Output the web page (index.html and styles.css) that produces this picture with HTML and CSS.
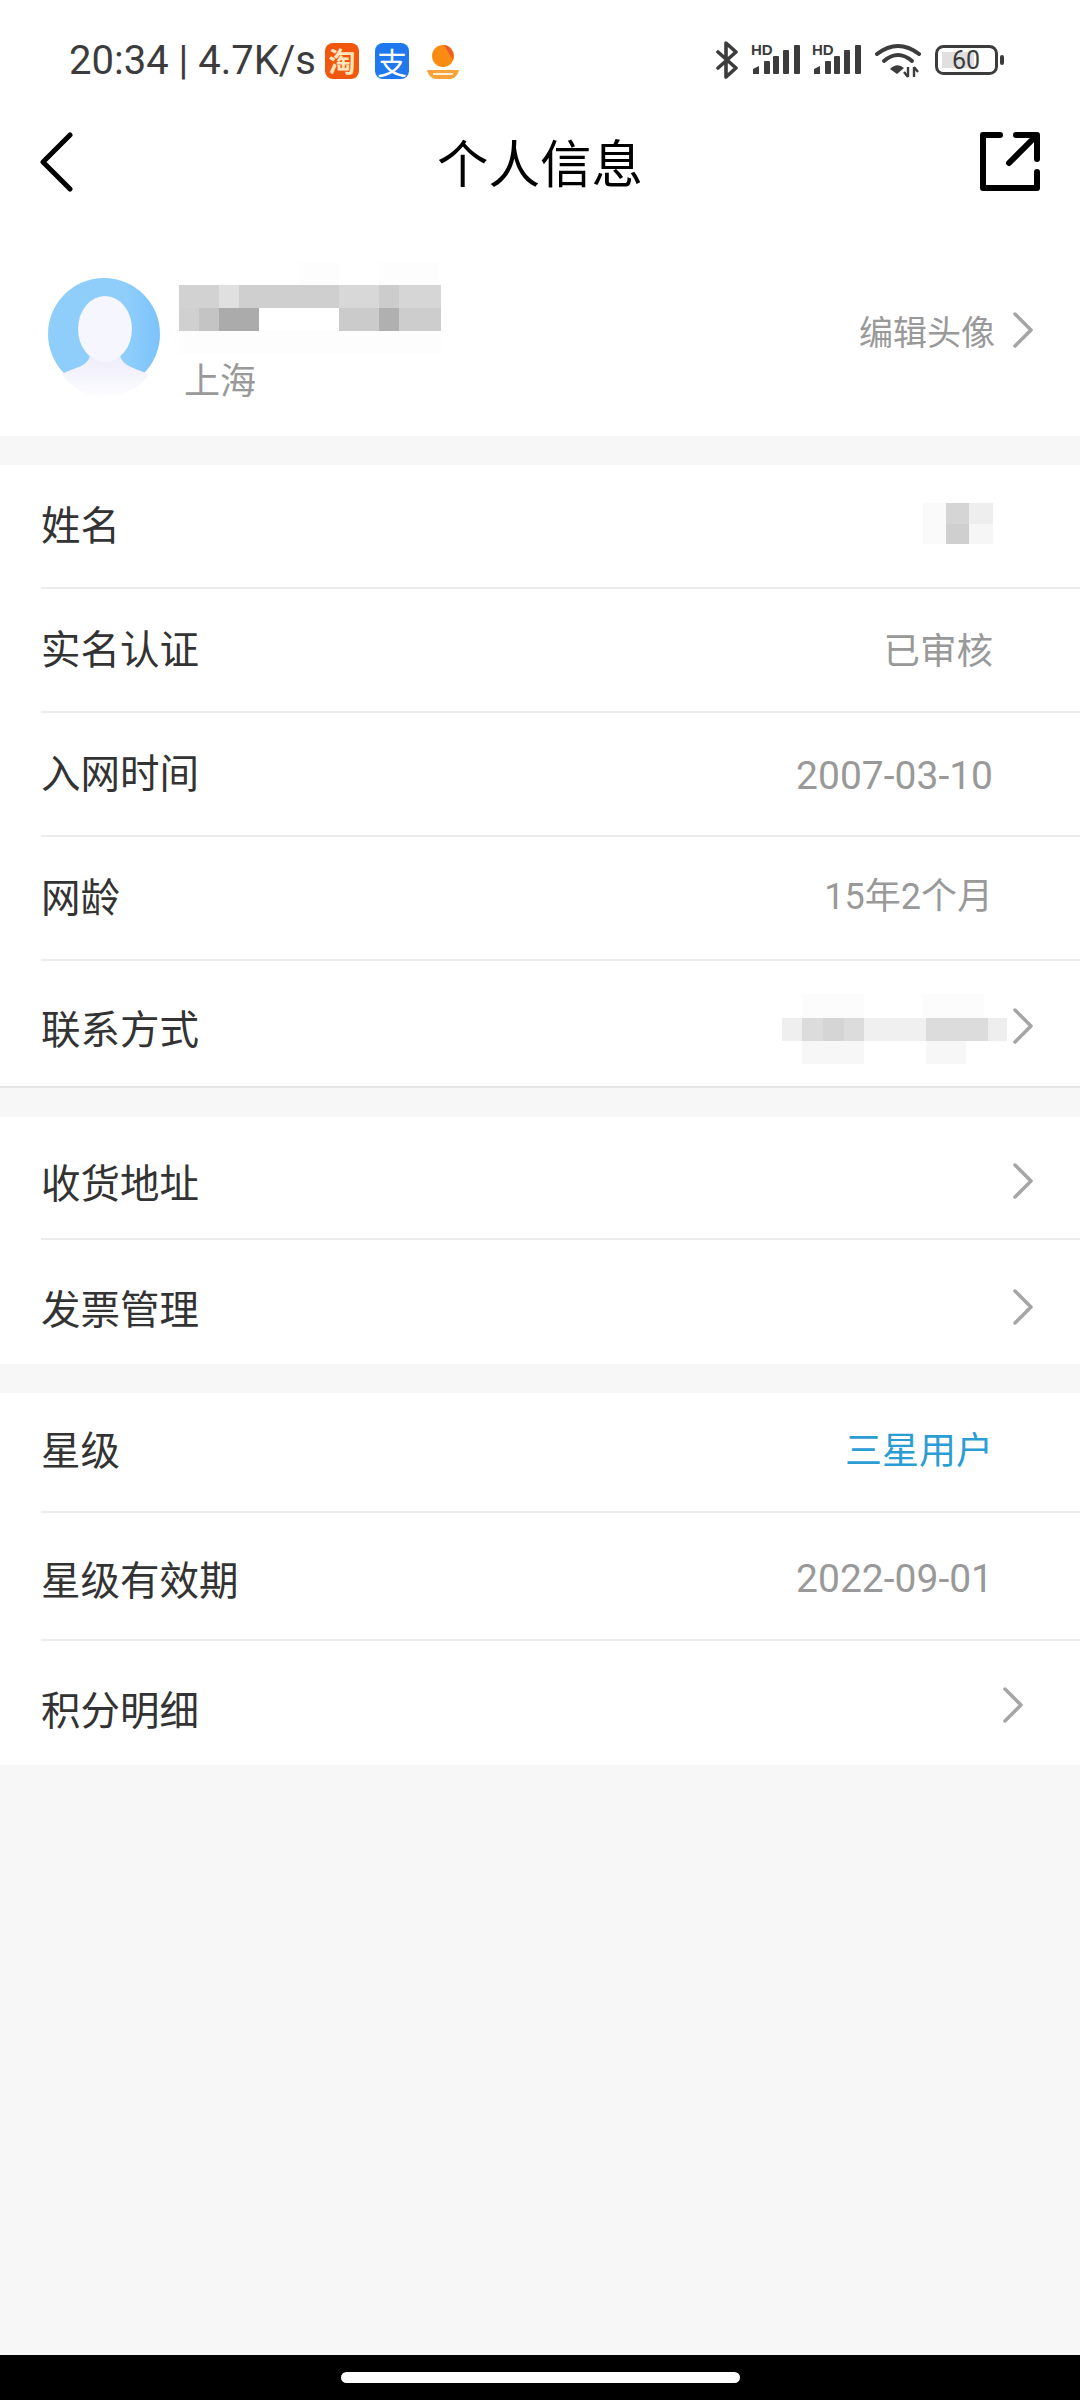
FILE: index.html
```html
<!DOCTYPE html>
<html lang="zh-CN">

<head>
    <meta charset="UTF-8">
    <meta name="viewport" content="width=device-width, initial-scale=1.0">
    <title>个人信息</title>
    <link rel="stylesheet" href="styles.css">
</head>

<body>
    <div class="status">
        <span class="status-text">20:34 | 4.7K/s</span>
        <span class="app-icon taobao">淘</span>
        <span class="app-icon alipay">支</span>
        <svg class="peach" width="34" height="36" viewBox="0 0 34 36">
            <circle cx="17" cy="13" r="11" fill="#f98a12" />
            <path d="M18 2 C25 3 28 9 27 17 C24 12 21 7 18 2 Z" fill="#ee5a2a" />
            <path d="M1 27 H33 C32 32 28 36 24 36 H10 C6 36 2 32 1 27 Z" fill="#f9a13a" />
            <rect x="7" y="30" width="20" height="2" fill="#fff0d8" />
        </svg>

        <div class="status-right">
            <svg class="bluetooth" width="24" height="38" viewBox="0 0 24 38">
                <path d="M3 11 L21 27 L11 36 V2 L21 11 L3 27" fill="none" stroke="#3c3c3c" stroke-width="3.6" stroke-linejoin="round" stroke-linecap="round" />
            </svg>
            <svg class="signal" width="49" height="34" viewBox="0 0 49 34">
                <text class="hd" x="0" y="14">HD</text>
                <path d="M2 33 V28 L8 25 V33 Z" fill="#3c3c3c" />
                <rect x="13" y="20" width="6" height="13" rx="1" fill="#3c3c3c" />
                <rect x="22" y="15" width="6" height="18" rx="1" fill="#3c3c3c" />
                <rect x="32" y="9" width="6" height="24" rx="1" fill="#3c3c3c" />
                <rect x="43" y="4" width="6" height="29" rx="1" fill="#3c3c3c" />
            </svg>
            <svg class="signal" width="49" height="34" viewBox="0 0 49 34">
                <text class="hd" x="0" y="14">HD</text>
                <path d="M2 33 V28 L8 25 V33 Z" fill="#3c3c3c" />
                <rect x="13" y="20" width="6" height="13" rx="1" fill="#3c3c3c" />
                <rect x="22" y="15" width="6" height="18" rx="1" fill="#3c3c3c" />
                <rect x="32" y="9" width="6" height="24" rx="1" fill="#3c3c3c" />
                <rect x="43" y="4" width="6" height="29" rx="1" fill="#3c3c3c" />
            </svg>
            <svg class="wifi" width="46" height="35" viewBox="0 0 46 35">
                <g fill="none" stroke="#3c3c3c" stroke-width="4" stroke-linecap="round">
                    <path d="M2 11 Q23 -5 44 11" />
                    <path d="M9 18 Q23 6 37 18" />
                </g>
                <path d="M15 26 Q22 19 29 25 L22 31 Z" fill="#3c3c3c" />
                <path d="M33 24 V34 M29 29 L33 34 M39 24 V34 M39 24 L43 29" fill="none" stroke="#3c3c3c" stroke-width="2.4" />
            </svg>
            <svg class="battery" width="70" height="30" viewBox="0 0 70 30">
                <rect x="1.5" y="1.5" width="60" height="27" rx="7" fill="none" stroke="#3c3c3c" stroke-width="3" />
                <rect x="7" y="7" width="32" height="16" fill="#e0e0e0" />
                <text class="battery-text" x="31" y="24">60</text>
                <rect x="65" y="10" width="4" height="10" rx="2" fill="#3c3c3c" />
            </svg>
        </div>
    </div>

    <div class="nav">
        <svg width="33" height="60" viewBox="0 0 33 60">
            <path d="M30 3 L3 30 L30 57" fill="none" stroke="#000" stroke-width="5" stroke-linecap="round" stroke-linejoin="round" />
        </svg>
        <h1 class="title">个人信息</h1>
        <svg class="share" width="60" height="60" viewBox="0 0 60 60">
            <g fill="none" stroke="#000" stroke-width="6" stroke-linecap="round" stroke-linejoin="round">
                <path d="M20 3 H3 V56 H57 V40" />
                <path d="M57 27 V3 H36" />
                <path d="M56 4 L29 31" />
            </g>
        </svg>
    </div>

    <div class="profile">
        <svg class="avatar" width="120" height="124" viewBox="0 0 120 124">
            <defs>
                <linearGradient id="ring" x1="0" y1="0" x2="1" y2="0">
                    <stop offset="0" stop-color="#8fcefb" />
                    <stop offset="0.7" stop-color="#8fcefb" />
                    <stop offset="1" stop-color="#7cc3fb" />
                </linearGradient>
                <linearGradient id="chest" x1="0" y1="0" x2="0" y2="1">
                    <stop offset="0" stop-color="#eeecfb" />
                    <stop offset="0.6" stop-color="#f6f6fd" />
                    <stop offset="1" stop-color="#fdfdff" />
                </linearGradient>
            </defs>
            <circle cx="59" cy="59" r="56" fill="url(#ring)" />
            <path d="M17 99 C30 92 43 92 45 80 H75 C77 92 92 93 104 100 C92 117 72 121 59 121 C42 121 27 114 17 99 Z" fill="url(#chest)" />
            <ellipse cx="60" cy="54" rx="27" ry="33" fill="#f5f6fe" />
        </svg>

        <div class="profile-info">
            <svg class="name-blur" width="262" height="92" viewBox="0 0 262 92" shape-rendering="crispEdges">
                <rect x="120" width="40" height="23" fill="#fdfdfd" />
                <rect x="200" width="60" height="23" fill="#fdfdfd" />
                <rect y="23" width="40" height="23" fill="#d2d2d2" />
                <rect x="40" y="23" width="20" height="23" fill="#e0e0e0" />
                <rect x="60" y="23" width="100" height="23" fill="#cfcfcf" />
                <rect x="160" y="23" width="40" height="23" fill="#d8d8d8" />
                <rect x="200" y="23" width="20" height="23" fill="#cccccc" />
                <rect x="220" y="23" width="42" height="23" fill="#d6d6d6" />
                <rect y="46" width="20" height="23" fill="#d0d0d0" />
                <rect x="20" y="46" width="20" height="23" fill="#c4c4c4" />
                <rect x="40" y="46" width="40" height="23" fill="#ababab" />
                <rect x="160" y="46" width="40" height="23" fill="#cbcbcb" />
                <rect x="200" y="46" width="20" height="23" fill="#b0b0b0" />
                <rect x="220" y="46" width="42" height="23" fill="#cdcdcd" />
                <rect y="69" width="262" height="23" fill="#fdfdfd" />
            </svg>
            <span class="city">上海</span>
        </div>

        <span class="edit">编辑头像</span>
        <svg class="chevron" width="20" height="36" viewBox="0 0 20 36">
            <path d="M2 2 L18 18 L2 34" />
        </svg>
    </div>

    <div class="section section-first">
        <div class="row row-plain">
            <span class="label">姓名</span>
            <svg width="70" height="41" viewBox="0 0 70 41" shape-rendering="crispEdges">
                <rect width="23" height="41" fill="#fafafa" />
                <rect x="23" width="23" height="21" fill="#d5d5d5" />
                <rect x="23" y="21" width="23" height="20" fill="#cfcfcf" />
                <rect x="46" width="24" height="21" fill="#eeeeee" />
                <rect x="46" y="21" width="24" height="20" fill="#f6f6f6" />
            </svg>
        </div>
        <div class="row row-plain">
            <span class="label">实名认证</span>
            <span class="value">已审核</span>
        </div>
        <div class="row row-plain">
            <span class="label">入网时间</span>
            <span class="value value-num">2007-03-10</span>
        </div>
        <div class="row row-plain">
            <span class="label">网龄</span>
            <span class="value value-mix">15年2个月</span>
        </div>
        <div class="row row-last row-contact">
            <span class="label">联系方式</span>
            <svg class="phone-blur" width="225" height="70" viewBox="0 0 225 70" shape-rendering="crispEdges">
                <rect x="20" width="62" height="24" fill="#fcfcfc" />
                <rect x="140" width="62" height="24" fill="#fcfcfc" />
                <rect y="24" width="20" height="23" fill="#efefef" />
                <rect x="20" y="24" width="21" height="23" fill="#dcdcdc" />
                <rect x="41" y="24" width="21" height="23" fill="#d5d5d5" />
                <rect x="62" y="24" width="20" height="23" fill="#dcdcdc" />
                <rect x="82" y="24" width="62" height="23" fill="#f0f0f0" />
                <rect x="144" y="24" width="62" height="23" fill="#dcdcdc" />
                <rect x="206" y="24" width="19" height="23" fill="#eeeeee" />
                <rect x="20" y="47" width="62" height="23" fill="#f7f7f7" />
                <rect x="144" y="47" width="40" height="23" fill="#f7f7f7" />
            </svg>
            <svg class="chevron" width="20" height="36" viewBox="0 0 20 36">
                <path d="M2 2 L18 18 L2 34" />
            </svg>
        </div>
    </div>

    <div class="section">
        <div class="row row-address">
            <span class="label">收货地址</span>
            <svg class="chevron" width="20" height="36" viewBox="0 0 20 36">
                <path d="M2 2 L18 18 L2 34" />
            </svg>
        </div>
        <div class="row row-last row-low">
            <span class="label">发票管理</span>
            <svg class="chevron" width="20" height="36" viewBox="0 0 20 36">
                <path d="M2 2 L18 18 L2 34" />
            </svg>
        </div>
    </div>

    <div class="section">
        <div class="row row-plain row-star">
            <span class="label">星级</span>
            <span class="value value-blue">三星用户</span>
        </div>
        <div class="row row-plain row-expire">
            <span class="label">星级有效期</span>
            <span class="value value-num">2022-09-01</span>
        </div>
        <div class="row row-last row-low row-points">
            <span class="label">积分明细</span>
            <svg class="chevron" width="20" height="36" viewBox="0 0 20 36">
                <path d="M2 2 L18 18 L2 34" />
            </svg>
        </div>
    </div>

    <div class="spacer"></div>

    <div class="home">
        <div class="home-bar"></div>
    </div>
</body>

</html>
```

FILE: styles.css
```css
* {
    box-sizing: border-box;
}

body {
    margin: 0;
    width: 1080px;
    height: 2400px;
    display: flex;
    flex-direction: column;
    background-color: #f7f7f7;
    font-family: "Noto Sans CJK SC", "Noto Sans", sans-serif;
    color: #333;
}

.status {
    height: 100px;
    padding: 40px 0 0 69px;
    display: flex;
    align-items: flex-start;
    background-color: #fff;
}

.status-text {
    font-family: Roboto, sans-serif;
    font-size: 40px;
    line-height: 42px;
    color: #3c3c3c;
    white-space: nowrap;
}

.app-icon {
    width: 34px;
    height: 36px;
    margin-top: 3px;
    border-radius: 8px;
    display: flex;
    align-items: center;
    justify-content: center;
    font-size: 27px;
    line-height: 36px;
    font-weight: 700;
}

.taobao {
    margin-left: 9px;
    background-color: #f2570f;
    color: #ffe6bd;
}

.alipay {
    margin-left: 16px;
    background-color: #1f78ee;
    color: #fff;
    font-size: 30px;
    font-weight: 400;
}

.peach {
    margin: 3px 0 0 17px;
}

.status-right {
    margin-left: auto;
    padding-right: 75px;
    display: flex;
    align-items: center;
    height: 40px;
}

.bluetooth {
    margin-right: 12px;
}

.signal {
    margin: 0 12px 4px 0;
}

.wifi {
    margin-left: 2px;
}

.battery {
    margin-left: 14px;
}

.hd {
    font-family: "Liberation Sans", sans-serif;
    font-size: 15px;
    font-weight: 700;
    fill: #3c3c3c;
}

.battery-text {
    font-family: Roboto, sans-serif;
    font-size: 25px;
    text-anchor: middle;
    fill: #3c3c3c;
}

.nav {
    height: 124px;
    padding: 0 40px;
    display: grid;
    grid-template-columns: 1fr auto 1fr;
    align-items: center;
    background-color: #fff;
}

.share {
    justify-self: end;
}

.title {
    margin: 0 0 3px;
    font-size: 51.5px;
    line-height: 70px;
    font-weight: 400;
    color: #000;
}

.profile {
    height: 212px;
    padding: 0 47px 0 45px;
    display: flex;
    align-items: center;
    background-color: #fff;
}

.avatar {
    margin-top: 14px;
    flex-shrink: 0;
}

.profile-info {
    margin-left: 14px;
    height: 100%;
    padding-top: 38px;
    display: flex;
    flex-direction: column;
}

.city {
    margin: -1px 0 0 5px;
    font-size: 36px;
    line-height: 50px;
    color: #999;
}

.edit {
    margin: 2px 18px 0 auto;
    font-size: 34px;
    line-height: 44px;
    color: #999;
}

.chevron {
    flex-shrink: 0;
}

.chevron path {
    fill: none;
    stroke: #a5a5a5;
    stroke-width: 3.5;
    stroke-linecap: round;
    stroke-linejoin: round;
}

.section {
    margin-top: 29px;
    background-color: #fff;
}

.section-first {
    border-bottom: 2px solid #e6e6e6;
}

.row {
    height: 124px;
    margin-left: 41px;
    padding: 0 47px 6px 0;
    border-bottom: 2px solid #ececec;
    display: flex;
    align-items: center;
    justify-content: space-between;
}

.row-plain {
    padding-right: 87px;
}

.row-last {
    border-bottom: none;
}

.row-low {
    padding-top: 10px;
    padding-bottom: 0;
}

.row-contact {
    height: 125px;
    padding-top: 7px;
    padding-bottom: 0;
}

.row-contact .chevron {
    margin-bottom: 3px;
}

.row-address {
    height: 123px;
    padding-top: 7px;
    padding-bottom: 0;
}

.row-star {
    height: 120px;
    padding-bottom: 9px;
}

.row-expire {
    height: 128px;
    padding-top: 3px;
    padding-bottom: 0;
}

.row-expire .value-num {
    margin-top: 3px;
}

.row-points {
    padding-right: 57px;
}

.row-points .chevron {
    margin-bottom: 6px;
}

.label {
    font-size: 39.5px;
    line-height: 54px;
}

.value {
    margin-top: 3px;
    font-size: 36.5px;
    line-height: 50px;
    color: #999;
}

.value-num {
    margin-top: 9px;
    font-family: Roboto, "Noto Sans CJK SC", sans-serif;
    font-size: 39px;
}

.value-mix {
    margin-top: 3px;
    font-family: Roboto, "Noto Sans CJK SC", sans-serif;
    font-size: 36px;
}

.value-blue {
    margin-top: 0;
    font-size: 37px;
    color: #2a9dd4;
}

.phone-blur {
    margin: 3px 6px 0 auto;
}

.spacer {
    flex: 1;
}

.home {
    height: 45px;
    display: flex;
    justify-content: center;
    align-items: center;
    background-color: #000;
}

.home-bar {
    width: 399px;
    height: 11px;
    border-radius: 6px;
    background-color: #fff;
}
```
